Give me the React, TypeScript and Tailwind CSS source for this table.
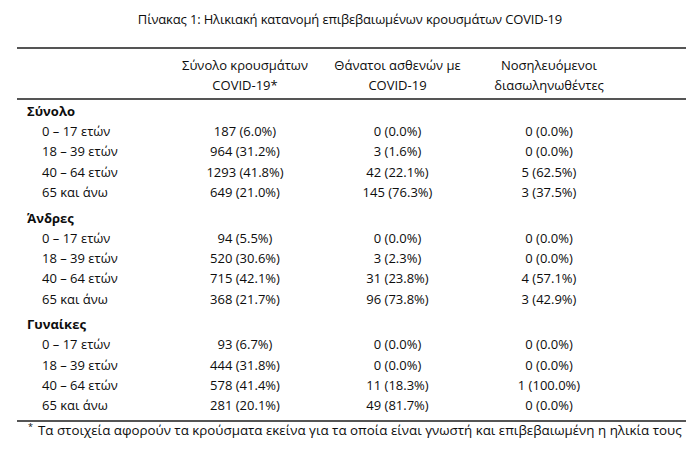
const groups = [
  {
    name: "Σύνολο",
    rows: [
      ["0 – 17 ετών", "187 (6.0%)", "0 (0.0%)", "0 (0.0%)"],
      ["18 – 39 ετών", "964 (31.2%)", "3 (1.6%)", "0 (0.0%)"],
      ["40 – 64 ετών", "1293 (41.8%)", "42 (22.1%)", "5 (62.5%)"],
      ["65 και άνω", "649 (21.0%)", "145 (76.3%)", "3 (37.5%)"],
    ],
  },
  {
    name: "Άνδρες",
    rows: [
      ["0 – 17 ετών", "94 (5.5%)", "0 (0.0%)", "0 (0.0%)"],
      ["18 – 39 ετών", "520 (30.6%)", "3 (2.3%)", "0 (0.0%)"],
      ["40 – 64 ετών", "715 (42.1%)", "31 (23.8%)", "4 (57.1%)"],
      ["65 και άνω", "368 (21.7%)", "96 (73.8%)", "3 (42.9%)"],
    ],
  },
  {
    name: "Γυναίκες",
    rows: [
      ["0 – 17 ετών", "93 (6.7%)", "0 (0.0%)", "0 (0.0%)"],
      ["18 – 39 ετών", "444 (31.8%)", "0 (0.0%)", "0 (0.0%)"],
      ["40 – 64 ετών", "578 (41.4%)", "11 (18.3%)", "1 (100.0%)"],
      ["65 και άνω", "281 (20.1%)", "49 (81.7%)", "0 (0.0%)"],
    ],
  },
];

const cols = "grid grid-cols-[153px_150px_155px_148px_1fr]";

export default function App() {
  return (
    <div className="w-[700px] h-[452px] bg-white text-[#0d0d0d] font-['Open_Sans',sans-serif] overflow-hidden">
      <div className="pt-[10px] h-[47px] text-center text-[13px] leading-[18px] tracking-[-0.15px]">
        Πίνακας 1: Ηλικιακή κατανομή επιβεβαιωμένων κρουσμάτων COVID-19
      </div>

      <div className="ml-[17px] w-[669px]">
        <div className="border-t-2 border-[#555]" />
        <div className={`${cols} text-[13px] leading-[20px] pt-[6px] pb-[3px]`}>
          <div />
          <div className="text-center">Σύνολο κρουσμάτων<br />COVID-19*</div>
          <div className="text-center">Θάνατοι ασθενών με<br />COVID-19</div>
          <div className="text-center">Νοσηλευόμενοι<br />διασωληνωθέντες</div>
          <div />
        </div>
        <div className="border-t-2 border-[#555]" />

        <div className="pt-[1px]">
          {groups.map((g, gi) => (
            <div key={g.name} className={gi > 0 ? "pt-[5px]" : ""}>
              <div className="h-[20px] leading-[20px] pl-[10px] text-[13px] font-bold">{g.name}</div>
              {g.rows.map((r) => (
                <div key={r[0]} className={`${cols} h-[20.4px] leading-[20.4px] text-[13px]`}>
                  <div className="pl-[25px]">{r[0]}</div>
                  <div className="text-center">{r[1]}</div>
                  <div className="text-center">{r[2]}</div>
                  <div className="text-center">{r[3]}</div>
                  <div />
                </div>
              ))}
            </div>
          ))}
        </div>

        <div className="mt-[4px] border-t-2 border-[#555]" />
        <div className="flex items-start pl-[11px] text-[13.35px] leading-[16px] whitespace-nowrap">
          <span className="text-[9px] leading-[9px] mr-[5px]">*</span>
          <span>Τα στοιχεία αφορούν τα κρούσματα εκείνα για τα οποία είναι γνωστή και επιβεβαιωμένη η ηλικία τους</span>
        </div>
      </div>
    </div>
  );
}
